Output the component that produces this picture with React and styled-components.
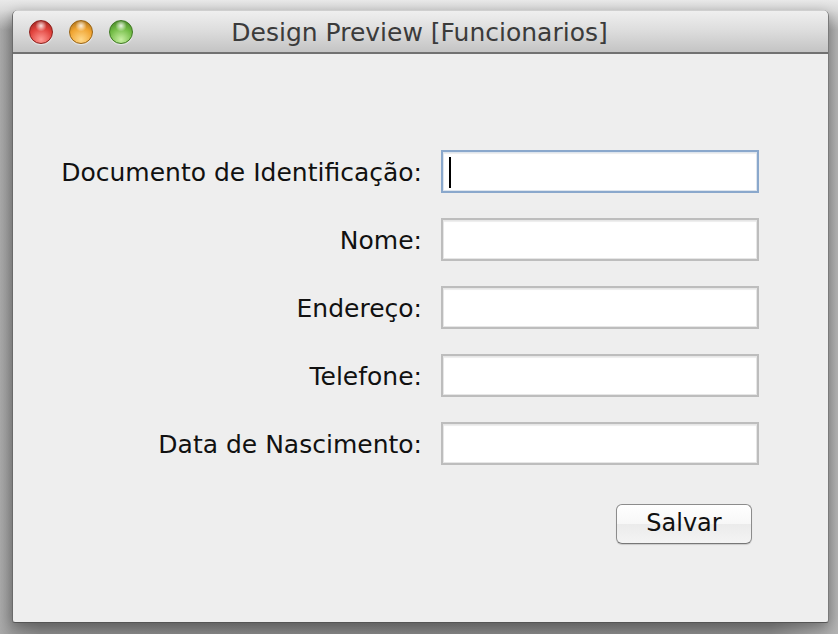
import React from "react";
import styled, { createGlobalStyle } from "styled-components";

const GlobalStyle = createGlobalStyle`
  html, body {
    margin: 0;
    padding: 0;
  }
  body {
    width: 838px;
    height: 634px;
    overflow: hidden;
    font-family: "DejaVu Sans", "Liberation Sans", sans-serif;
  }
`;

const Desktop = styled.div`
  width: 838px;
  height: 634px;
  box-sizing: border-box;
  padding: 10px 9px 12px 12px;
  background:
    linear-gradient(180deg, #e9e9e9 0px, #dcdcdc 10px, transparent 30px),
    linear-gradient(90deg, #a9a9a9 0px, #9a9a9a 12px, #8a8a8a 40px, #858585 50%, #8a8a8a 92%, #b4b4b4 100%);
`;

const Window = styled.div`
  height: 100%;
  display: flex;
  flex-direction: column;
  border-radius: 6px 6px 3px 3px;
  overflow: hidden;
  background: #eeeeee;
  border-left: 1px solid #6a6a6a;
  border-right: 1px solid #7a7a7a;
  border-bottom: 1px solid #555555;
  box-shadow: 0 4px 14px rgba(0, 0, 0, 0.35);
`;

const TitleBar = styled.div`
  position: relative;
  height: 44px;
  flex: none;
  display: flex;
  align-items: center;
  justify-content: center;
  background: linear-gradient(180deg, #efefef 0%, #dedede 45%, #c4c4c4 100%);
  border-bottom: 2px solid #717171;
  border-top: 1px solid #cfcfcf;
  box-sizing: border-box;
`;

const Lights = styled.div`
  position: absolute;
  left: 16px;
  top: 9px;
  display: flex;
  gap: 16px;
`;

const Light = styled.span`
  width: 24px;
  height: 24px;
  border-radius: 50%;
  box-sizing: border-box;
  border: 1px solid ${(p) => p.$edge};
  background:
    radial-gradient(circle at 50% 22%, rgba(255, 255, 255, 0.85) 0, rgba(255, 255, 255, 0) 28%),
    radial-gradient(circle at 50% 85%, ${(p) => p.$glow} 0, ${(p) => p.$base} 55%, ${(p) => p.$edge} 100%);
  box-shadow: 0 1px 1px rgba(255, 255, 255, 0.6);
`;

const Title = styled.span`
  font-size: 25px;
  color: #3b3b3b;
  margin-right: 2px;
  margin-top: 2px;
`;

const Content = styled.div`
  flex: 1;
  padding-top: 95px;
`;

const Form = styled.div`
  display: grid;
  grid-template-columns: 409px 318px;
  grid-auto-rows: 44px;
  column-gap: 19px;
  row-gap: 24px;
  align-items: center;
`;

const Label = styled.label`
  justify-self: end;
  font-size: 25px;
  color: #111111;
  padding-top: 2px;
`;

const Field = styled.div`
  position: relative;
  height: 43px;
  box-sizing: border-box;
  background: #ffffff;
  border: 2px solid ${(p) => (p.$focused ? "#8aa8cc" : "#bdbdbd")};
  box-shadow: inset 0 0 0 1px ${(p) => (p.$focused ? "#dde5ee" : "#e6e6e6")},
    inset 0 2px 1px #ededed;
`;

const Caret = styled.span`
  position: absolute;
  left: 6px;
  top: 5px;
  width: 2px;
  height: 31px;
  background: #000000;
`;

const Actions = styled.div`
  grid-column: 2;
  justify-self: end;
  margin-right: 7px;
  margin-top: 26px;
`;

const Button = styled.button`
  width: 136px;
  height: 40px;
  font-family: inherit;
  font-size: 24px;
  color: #111111;
  border: 1px solid #8c8c8c;
  border-bottom-color: #777777;
  border-radius: 6px;
  background: linear-gradient(180deg, #ffffff 0%, #f7f7f7 50%, #ebebeb 51%, #f4f4f4 100%);
  box-shadow: 0 1px 1px rgba(0, 0, 0, 0.15);
  padding: 0 0 2px;
`;

const fields = [
  "Documento de Identificação:",
  "Nome:",
  "Endereço:",
  "Telefone:",
  "Data de Nascimento:",
];

export default function App() {
  return (
    <>
      <GlobalStyle />
      <Desktop>
        <Window>
          <TitleBar>
            <Lights>
              <Light $base="#e0413b" $glow="#ff9a94" $edge="#8e1f1b" />
              <Light $base="#f0a431" $glow="#ffd98a" $edge="#9a6414" />
              <Light $base="#72bc45" $glow="#c9f0a4" $edge="#3f7a22" />
            </Lights>
            <Title>Design Preview [Funcionarios]</Title>
          </TitleBar>
          <Content>
            <Form>
              {fields.map((f, i) => (
                <React.Fragment key={f}>
                  <Label>{f}</Label>
                  <Field $focused={i === 0}>{i === 0 && <Caret />}</Field>
                </React.Fragment>
              ))}
              <Actions>
                <Button>Salvar</Button>
              </Actions>
            </Form>
          </Content>
        </Window>
      </Desktop>
    </>
  );
}
